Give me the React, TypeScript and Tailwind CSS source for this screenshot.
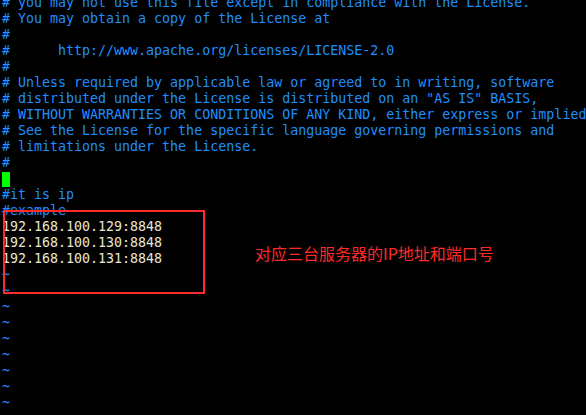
import React from "react";

const comments = [
  "# you may not use this file except in compliance with the License.",
  "# You may obtain a copy of the License at",
  "#",
  "#      http://www.apache.org/licenses/LICENSE-2.0",
  "#",
  "# Unless required by applicable law or agreed to in writing, software",
  '# distributed under the License is distributed on an "AS IS" BASIS,',
  "# WITHOUT WARRANTIES OR CONDITIONS OF ANY KIND, either express or implied",
  "# See the License for the specific language governing permissions and",
  "# limitations under the License.",
  "#",
];

export default function App() {
  return (
    <div className="relative w-[586px] h-[415px] bg-black overflow-hidden">
      <div
        className="-mt-[5px] pl-[2px] text-[13.3px] leading-[16px] whitespace-pre"
        style={{ fontFamily: '"DejaVu Sans Mono", monospace' }}
      >
        {comments.map((c, i) => (
          <div key={i} className="h-[16px] text-[#1e8fff]">{c}</div>
        ))}
        <div className="h-[16px] flex items-center">
          <span className="inline-block w-[8px] h-[15px] bg-[#00ff00]" />
        </div>
        <div className="h-[16px] text-[#1e8fff]">#it is ip</div>
        <div className="h-[16px] text-[#1e8fff]">#example</div>
        <div className="h-[16px] text-[#eae6d6]">192.168.100.129:8848</div>
        <div className="h-[16px] text-[#eae6d6]">192.168.100.130:8848</div>
        <div className="h-[16px] text-[#eae6d6]">192.168.100.131:8848</div>
        {Array.from({ length: 9 }).map((_, i) => (
          <div key={i} className="h-[16px] text-[#1e8fff]">~</div>
        ))}
      </div>
      <div className="absolute left-[3px] top-[210px] w-[202px] h-[84px] border-2 border-[#ff2a2a]" />
      <div
        className="absolute left-[255px] top-[243px] text-[16px] leading-[20px] text-[#ff2a2a]"
        style={{ fontFamily: '"Noto Sans CJK SC", sans-serif' }}
      >
        对应三台服务器的IP地址和端口号
      </div>
    </div>
  );
}
